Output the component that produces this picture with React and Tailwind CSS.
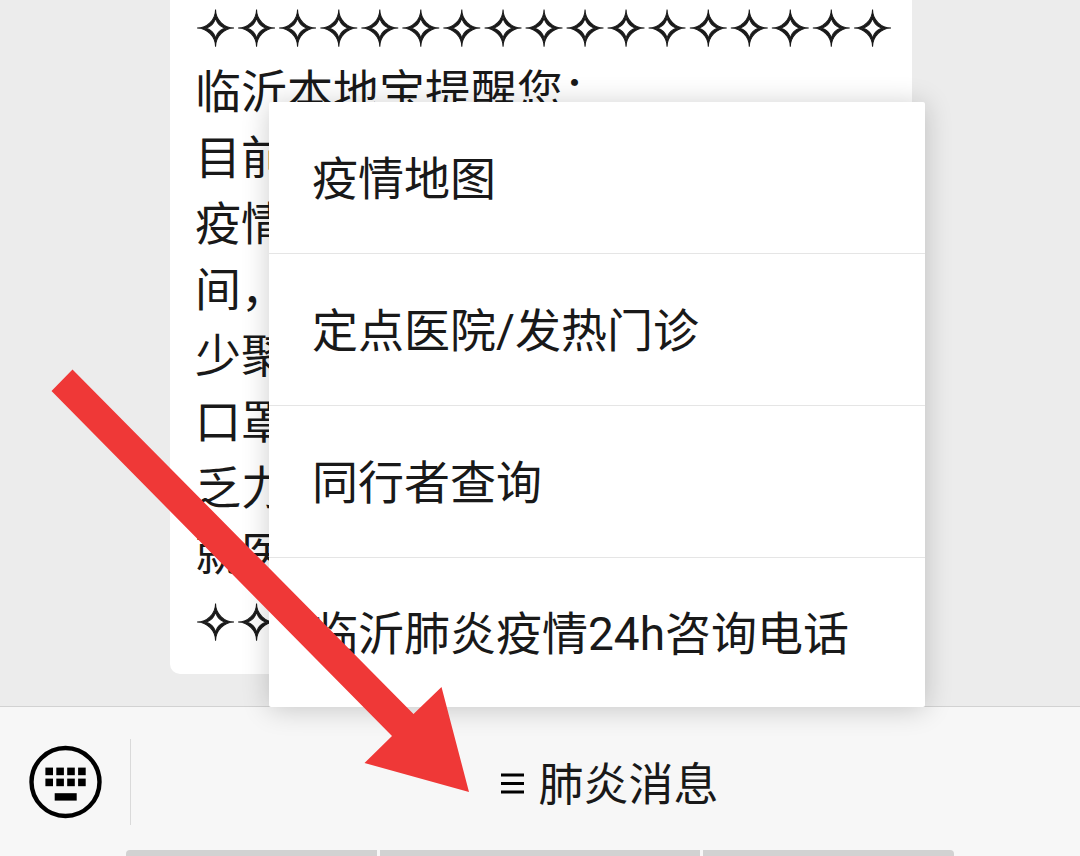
const MESSAGE = [
  "临沂本地宝提醒您：",
  "目前",
  "疫情",
  "间，",
  "少聚",
  "口罩",
  "乏力",
  "就医",
];

const MENU = ["疫情地图", "定点医院/发热门诊", "同行者查询", "临沂肺炎疫情24h咨询电话"];

function StarRow({ count }) {
  return (
    <p className="h-[66px] whitespace-nowrap font-['DejaVu_Sans',sans-serif] text-[49px] leading-[74px] [-webkit-text-stroke:1px_#191919]">
      {"✧".repeat(count)}
    </p>
  );
}

function MessageBubble() {
  return (
    <div className="ml-[170px] mr-[168px] rounded-b-[10px] bg-white px-[25px] pb-[21px] text-[46px] leading-[66px]">
      <StarRow count={17} />
      {MESSAGE.map((line) => (
        <p key={line}>{line}</p>
      ))}
      <StarRow count={2} />
    </div>
  );
}

function PopupMenu() {
  return (
    <nav className="absolute bottom-full left-[269px] right-[155px] divide-y divide-[#e5e5e5] rounded-[2px] bg-white shadow-[0_2px_28px_rgba(0,0,0,0.2)]">
      {MENU.map((item) => (
        <button key={item} className="block h-[152px] w-full px-[43px] pt-1 text-left text-[46px] last:h-[149px]">
          {item}
        </button>
      ))}
    </nav>
  );
}

function KeyboardIcon() {
  return (
    <svg width="74" height="74" viewBox="0 0 74 74" aria-hidden="true">
      <circle cx="37.5" cy="37" r="34" fill="none" stroke="#000" strokeWidth="4.4" />
      {[17.4, 28.3, 39.2, 50.1].map((x) => (
        <g key={x}>
          <rect x={x} y="22.6" width="7.6" height="7.6" />
          <rect x={x} y="33.6" width="7.6" height="7.6" />
        </g>
      ))}
      <rect x="26.7" y="48.2" width="22" height="7.4" />
    </svg>
  );
}

function Arrow() {
  return (
    <svg
      className="pointer-events-none absolute bottom-[63px] left-[50px]"
      width="420"
      height="424"
      viewBox="50 369 420 424"
      aria-hidden="true"
    >
      <path d="M72.5 369.5 L413.5 714 L441.5 687 L469 792 L364.5 763 L392 736 L51.5 391 Z" fill="#ef3837" />
    </svg>
  );
}

export default function App() {
  return (
    <div className="relative flex h-screen flex-col overflow-hidden bg-[#ececec] font-[Roboto,'Noto_Sans_CJK_SC',sans-serif] text-[#191919]">
      <main className="flex min-h-0 flex-1 flex-col justify-end overflow-hidden pb-8">
        <MessageBubble />
      </main>

      <footer className="relative border-t border-[#d2d2d2] bg-[#f7f7f7]">
        <PopupMenu />
        <div className="flex h-[143px] items-center pt-[7px]">
          <button aria-label="键盘" className="flex h-[86px] w-[131px] items-center justify-center border-r border-[#dadada]">
            <KeyboardIcon />
          </button>
          <button className="flex flex-1 items-center justify-center gap-3 pl-2 pt-0.5 text-[45px] leading-[66px]">
            <svg width="26" height="24" viewBox="0 0 26 24" aria-hidden="true">
              <path d="M1 4h23M1 12.5h23M1 21h23" stroke="#000" strokeWidth="3" />
            </svg>
            <span className="pt-1.5">肺炎消息</span>
          </button>
        </div>
        <div className="mx-[126px] flex h-1.5 gap-[3px] overflow-hidden rounded-t-sm">
          <div className="flex-[251] bg-[#d2d2d2]" />
          <div className="flex-[320] bg-[#d2d2d2]" />
          <div className="flex-[251] bg-[#d2d2d2]" />
        </div>
      </footer>

      <Arrow />
    </div>
  );
}
